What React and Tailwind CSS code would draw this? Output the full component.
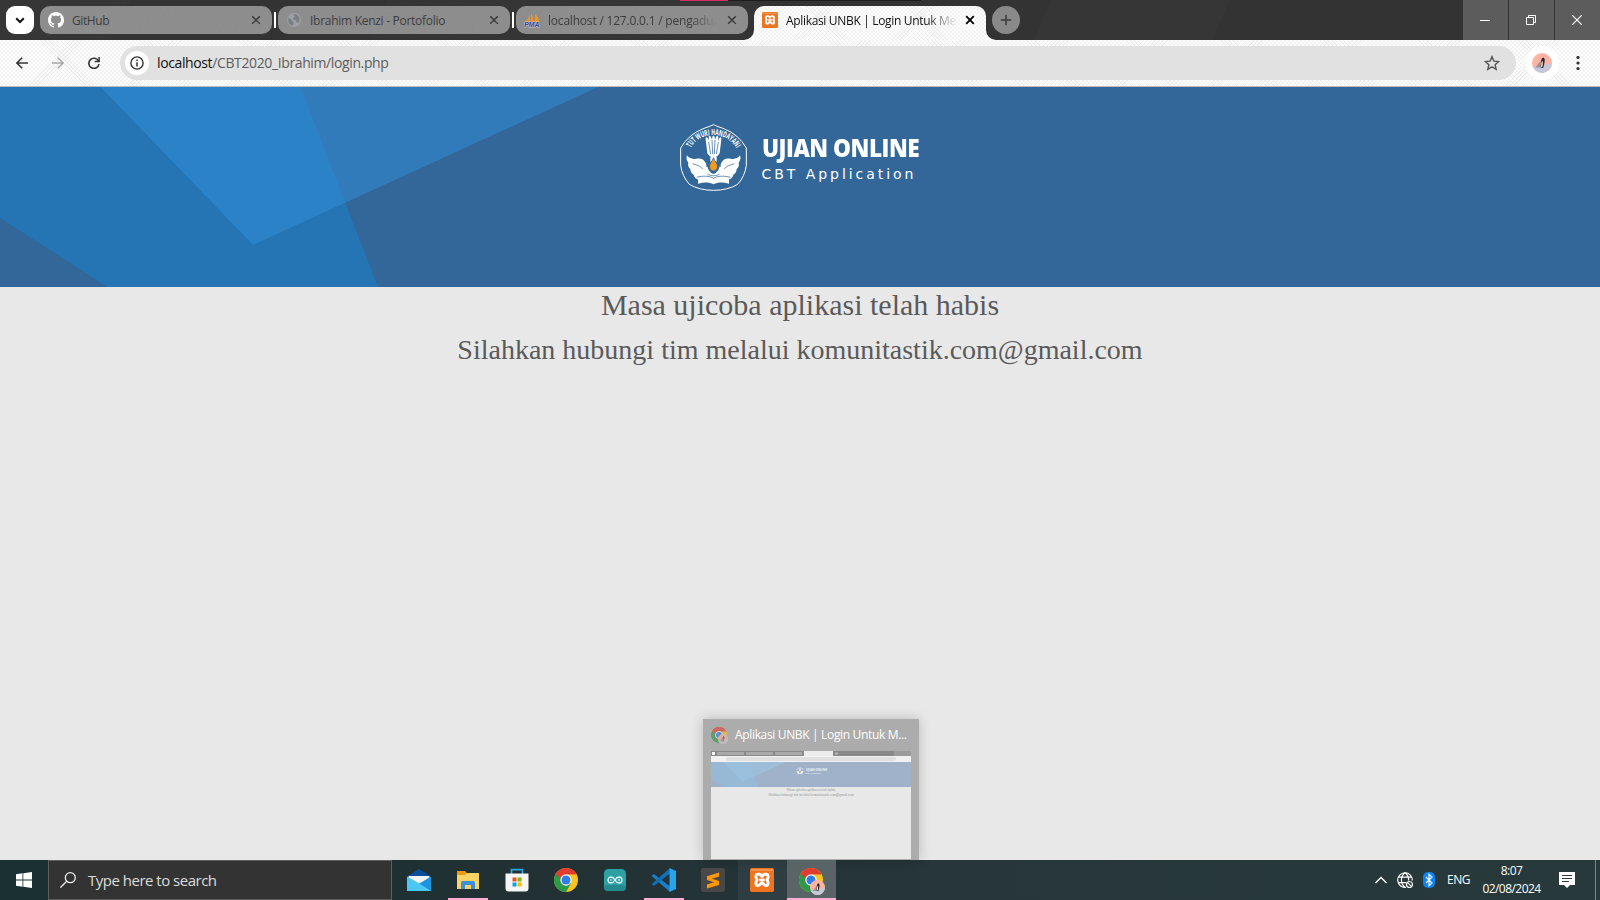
import React from "react";

const UI = "font-['Open_Sans','Noto_Sans',sans-serif]";

function Chevron() {
  return (
    <svg className="size-3" viewBox="0 0 12 12" fill="none" stroke="#111" strokeWidth="2">
      <path d="M2.2 4.2 6 8l3.8-3.8" />
    </svg>
  );
}

function Close({ color = "#333", w = 1.5 }) {
  return (
    <svg className="size-2.5 shrink-0" viewBox="0 0 10 10" stroke={color} strokeWidth={w}>
      <path d="M1.2 1.2 8.8 8.8M8.8 1.2 1.2 8.8" />
    </svg>
  );
}

function GitHubIcon() {
  return (
    <svg className="relative size-4 shrink-0" viewBox="0 0 16 16" fill="#fff">
      <path d="M8 0C3.58 0 0 3.58 0 8c0 3.54 2.29 6.53 5.47 7.59.4.07.55-.17.55-.38 0-.19-.01-.82-.01-1.49-2.01.37-2.53-.49-2.69-.94-.09-.23-.48-.94-.82-1.13-.28-.15-.68-.52-.01-.53.63-.01 1.08.58 1.23.82.72 1.21 1.87.87 2.33.66.07-.52.28-.87.51-1.07-1.78-.2-3.64-.89-3.64-3.95 0-.87.31-1.59.82-2.15-.08-.2-.36-1.02.08-2.12 0 0 .67-.21 2.2.82.64-.18 1.32-.27 2-.27s1.36.09 2 .27c1.53-1.04 2.2-.82 2.2-.82.44 1.1.16 1.92.08 2.12.51.56.82 1.27.82 2.15 0 3.07-1.87 3.75-3.65 3.95.29.25.54.73.54 1.48 0 1.07-.01 1.93-.01 2.2 0 .21.15.46.55.38A8.01 8.01 0 0 0 16 8c0-4.42-3.58-8-8-8z" />
    </svg>
  );
}

function GlobeIcon() {
  return (
    <svg className="relative size-4 shrink-0" viewBox="0 0 16 16">
      <circle cx="8" cy="8" r="7" fill="#9aa0a6" />
      <path d="M2.2 6.2c2 .2 3.300.8 3.600 2.300.2 1.200 1.800 1 1.900 2.500.1 1.200-.8 1.500-.9 2.700C3.500 13 1.500 9.800 2.200 6.200zM7.500 2c.2 1.500 1.200 1.600 1 2.900-.3 1.200-2 .8-1.800 2.400.2 1 2.300.2 3.200 1.200.8.8.4 1.800 1.500 2.200 1.200.3 1.800-.6 2-1.700C14.300 5 11.200 1.800 7.500 2z" fill="#7c7f82" />
    </svg>
  );
}

function PmaIcon() {
  return (
    <svg className="relative size-4 shrink-0" viewBox="0 0 16 16">
      <path d="M5.800.6C5.700 4.500 4.200 7.800 1 9.900h5.200zM7 1.400v8.500h2.600C9.400 6.500 8.700 3.700 7 1.400zM11 1.800c.2 3 .1 5.800-.6 8.100h4.800C14.800 6.500 13.500 4 11 1.800z" fill="#f6931d" />
      <text x="0.300" y="15.400" fontSize="6.600" fontWeight="700" fontStyle="italic" fill="#3d418c" stroke="#c6c7dd" strokeWidth="1" paintOrder="stroke" textLength="15.200" lengthAdjust="spacingAndGlyphs" fontFamily="Liberation Sans, sans-serif">PMA</text>
    </svg>
  );
}

function XamppIcon({ className }) {
  return (
    <svg className={className} viewBox="0 0 24 24">
      <rect width="24" height="24" rx="1.800" fill="#ee7420" />
      <path d="M1 2h22" stroke="#f8a56c" strokeWidth="1.200" />
      <path d="M8 6.200h1.600c1.700 0 1.600 2.400 2.400 2.400s.7-2.400 2.400-2.400H16c2.600 0 2.600 3.600.9 5.700 1.700 2.200 1.700 5.600-.9 5.600-3 0-2.300-2.800-4-2.800s-1 2.800-4 2.800c-2.600 0-2.600-3.400-.9-5.600C5.400 9.800 5.400 6.200 8 6.200z" fill="none" stroke="#fff" strokeWidth="2.900" strokeLinejoin="round" />
      <path d="M9.300 11.900h5.400" stroke="#fff" strokeWidth="2.600" />
    </svg>
  );
}

function Noise() {
  return (
    <svg className="pointer-events-none absolute inset-0 size-full opacity-25">
      <filter id="grain">
        <feTurbulence type="fractalNoise" baseFrequency=".45" numOctaves="3" />
        <feColorMatrix values="0 0 0 0 .3  0 0 0 0 .3  0 0 0 0 .3  0 0 0 3 -1.200" />
      </filter>
      <rect width="100%" height="100%" filter="url(#grain)" />
    </svg>
  );
}

function Tab({ icon, label, spacing, fade }) {
  return (
    <div className="relative flex h-7 w-[232px] shrink-0 items-center overflow-hidden rounded-[10px] bg-[#8d8d8d] pl-2 pr-[11px]">
      <Noise />
      {icon}
      <span className={`relative ml-2 flex-1 overflow-hidden whitespace-nowrap pt-px text-[12px] leading-[27px] text-[#3d3d3d] ${spacing} ${fade}`}>{label}</span>
      <Close />
    </div>
  );
}

const FADE = "[mask-image:linear-gradient(to_right,#000_80%,transparent_94%)]";
const WEAVE =
  "bg-white bg-[repeating-linear-gradient(45deg,transparent_0_2px,#0000000d_2px_2.800px),repeating-linear-gradient(-45deg,transparent_0_2px,#0000000d_2px_2.800px)]";

function Avatar({ className }) {
  return (
    <svg className={className} viewBox="0 0 20 20">
      <defs>
        <clipPath id="avatarClip"><circle cx="10" cy="10" r="10" /></clipPath>
      </defs>
      <g clipPath="url(#avatarClip)">
        <rect width="20" height="20" fill="#ffb3a3" />
        <path d="M0 14c6-1 12-1 20-4v10H0z" fill="#c3c9da" />
        <path d="m3.500 14.500 4-6 1.500 6z" fill="#a39597" />
        <path d="M8.800 14.500C8.200 10 9 5.500 11 4.400c1.900.100 2 3 1.400 5.600L11.200 15z" fill="#2a2526" />
        <path d="M9.300 14c-.2-3 .1-5.200 1.200-6.600.6 2.300.2 4.800-.3 6.600z" fill="#fff" />
      </g>
    </svg>
  );
}

function TabStrip() {
  return (
    <div className="relative flex h-10 shrink-0 items-start bg-[#343434] bg-[linear-gradient(115deg,#363636_0_8%,#333_8%_24%,#353535_24%_47%,#333_47%_65%,#363636_65%_76%,#333_76%)]">
      <div className="absolute left-[680px] top-0 h-px w-12 bg-[#d72b68]" />
      <div className="absolute left-[728px] top-0 h-px w-[193px] bg-[#1d1d1d]" />
      <div className="ml-1.5 mt-1.5 flex size-7 shrink-0 items-center justify-center rounded-[9px] bg-white"><Chevron /></div>
      <div className="ml-1.5 mt-1.5 flex items-center">
        <Tab icon={<GitHubIcon />} label="GitHub" spacing="tracking-[-0.4px]" fade="" />
        <div className="mx-0.5 h-4 w-0.5 bg-white" />
        <Tab icon={<GlobeIcon />} label="Ibrahim Kenzi - Portofolio" spacing="tracking-[-0.28px]" fade="" />
        <div className="mx-0.5 h-4 w-0.5 bg-white" />
        <Tab icon={<PmaIcon />} label="localhost / 127.0.0.1 / pengaduan" spacing="tracking-[-0.2px]" fade={FADE} />
      </div>
      <div className="-ml-1 mt-1.5 flex h-[34px] items-end">
        <svg className="size-2.5" viewBox="0 0 10 10"><path d="M0 10A10 10 0 0 0 10 0v10z" fill="#fbfbfb" /></svg>
        <div className={`flex h-[34px] w-[232px] items-start rounded-t-[10px] pl-2 pr-[11px] ${WEAVE}`}>
          <XamppIcon className="mt-1.5 size-4 shrink-0" />
          <span className={`ml-2 mr-2 flex-1 overflow-hidden whitespace-nowrap pt-px text-[12px] leading-7 tracking-[-0.33px] text-[#111] [mask-image:linear-gradient(to_right,#000_82%,transparent_100%)]`}>Aplikasi UNBK | Login Untuk Me</span>
          <div className="mt-[9px] flex"><Close color="#000" w={1.8} /></div>
        </div>
        <svg className="size-2.5" viewBox="0 0 10 10"><path d="M0 0A10 10 0 0 0 10 10H0z" fill="#fbfbfb" /></svg>
      </div>
      <div className="-ml-1 mt-1.5 flex size-7 items-center justify-center rounded-full bg-[#898989]">
        <svg className="size-3" viewBox="0 0 12 12" stroke="#3a3a3a" strokeWidth="1.500"><path d="M6 .8v10.400M.8 6h10.400" /></svg>
      </div>
      <div className="ml-auto flex h-10 gap-px">
        <div className="flex w-[45px] items-center bg-[#5c5c5c] pl-[17px] pt-px"><div className="h-px w-2.5 bg-white" /></div>
        <div className="flex w-[45px] items-center bg-[#5c5c5c] pl-[17px]">
          <svg className="size-2.5" viewBox="0 0 10 10" fill="none" stroke="#fff"><path d="M.5 2.500h7v7h-7zM2.500 2.500v-2h7v7h-2" /></svg>
        </div>
        <div className="flex w-[45px] items-center bg-[#5c5c5c] pl-[17px]">
          <svg className="size-2.5" viewBox="0 0 10 10" stroke="#fff" strokeWidth="1.100"><path d="m0 0 10 10M10 0 0 10" /></svg>
        </div>
      </div>
    </div>
  );
}

function Toolbar() {
  return (
    <div className={`flex h-[47px] shrink-0 items-start border-b border-[#bcbcbc] pt-1.5 ${WEAVE}`}>
      <div className="flex h-[34px] items-center">
        <svg className="ml-4 size-3" viewBox="0 0 12 12" fill="none" stroke="#333" strokeWidth="1.500"><path d="M12 6H1M6.200.7.900 6l5.300 5.300" /></svg>
        <svg className="ml-6 size-3" viewBox="0 0 12 12" fill="none" stroke="#a8a8a8" strokeWidth="1.500"><path d="M0 6h11M5.800.700 11.100 6l-5.300 5.300" /></svg>
        <svg className="ml-6 size-3" viewBox="0 0 12 12"><path d="M10.600 4.200A5.100 5.100 0 1 0 11 7" fill="none" stroke="#333" strokeWidth="1.600" /><path d="M11.900 0v5.200H6.700V3.700h3.700V0z" fill="#333" /></svg>
      </div>
      <div className="ml-5 flex h-[34px] w-[1396px] items-center rounded-full bg-[#e1e1e1] pl-[5px] pr-4">
        <div className="flex size-6 items-center justify-center rounded-full bg-white">
          <svg className="size-3.5" viewBox="0 0 14 14"><circle cx="7" cy="7" r="6.100" fill="none" stroke="#333" strokeWidth="1.400" /><path d="M7 6.200v4.300M7 3.400v1.500" stroke="#333" strokeWidth="1.500" /></svg>
        </div>
        <span className="mb-px ml-2 whitespace-nowrap text-[14px] tracking-[-0.38px] text-[#5c5c5c]"><span className="text-[#111]">localhost</span>/CBT2020_Ibrahim/login.php</span>
        <svg className="ml-auto size-4" viewBox="0 0 16 16" fill="none" stroke="#555" strokeWidth="1.400"><path d="m8 1.700 1.900 4.400 4.800.4-3.600 3.200 1.100 4.700L8 11.900l-4.200 2.500 1.100-4.700L1.300 6.500l4.800-.4z" /></svg>
      </div>
      <div className="ml-[9px] flex size-[34px] items-center justify-center rounded-full bg-white"><Avatar className="size-5" /></div>
      <svg className="ml-[17px] mt-2.5 h-3.5 w-1" viewBox="0 0 4 14" fill="#333"><circle cx="2" cy="1.500" r="1.600" /><circle cx="2" cy="7" r="1.600" /><circle cx="2" cy="12.500" r="1.600" /></svg>
    </div>
  );
}

function Emblem({ className }) {
  return (
    <svg className={className} viewBox="0 0 201 201">
      <path d="M100.500 2Q88 8 72 13 26 30 2 72V124Q6 156 28 181 58 199 100.500 199T173 181Q195 156 199 124V72Q175 30 129 13 113 8 100.500 2z" fill="none" stroke="#fff" strokeWidth="3" />
      <path id="mottoArc" d="M32 72C60 20 141 20 169 74" fill="none" />
      <text fontSize="25" fontWeight="700" fill="#fff" fontFamily="Open Sans, sans-serif"><textPath href="#mottoArc" textLength="166" lengthAdjust="spacingAndGlyphs">TUT WURI HANDAYANI</textPath></text>
      <g fill="#fff">
        <path d="M21 94c7 10 17 12 28 10 15-3 24 3 29 14l8 20q6 10 14.500 12 8.500-2 14.500-12l8-20c5-11 14-17 29-14 11 2 21 0 28-10 3 8 1 16-4 22 2 8 0 14-6 19 0 8-4 14-10 17-1 8-8 14-18 15q-20-2-41.500 2-21.500-4-41.500-2c-10-1-17-7-18-15-6-3-10-9-10-17-6-5-8-11-6-19-5-6-7-14-4-22z" />
        <path d="M77 46c-1-6 3-8 6-4l4 8-1-10c1-5 5-5 7-1l3 8 1-8c1-5 6-5 7 0l1 8 3-8c2-4 6-4 7 1l-1 10 4-8c3-4 7-2 6 4l-5 42-9 11v14H91V99l-9-11z" />
        <path d="M54 164c18-6 35-5 46.500 3 11.500-8 28.500-9 46.500-3v15c-18-5-34-5-46.500 2-12.500-7-28.500-7-46.500-2z" />
      </g>
      <g fill="none" stroke="#336799" strokeWidth="2.200">
        <path d="m86 54 6 36m4-42 2 42m7-42-2 42m12-36-6 36" />
        <path d="M92 97c-10 6-13 18-12 32m29-32c10 6 13 18 12 32M82 150c10 7 27 7 37 0" />
        <path d="M38 119c12 5 23 5 30 16m95-16c-12 5-23 5-30 16" />
        <path d="M50 160c18-5 38-5 50.500 3 12.500-8 32.500-8 50.500-3" />
      </g>
      <circle cx="100.500" cy="98" r="4" fill="#fff" />
      <path d="M100.500 101c-3 11-13 17-12 28 1 8 6 12 12 12s11-4 12-12c1-11-9-17-12-28z" fill="#f29a1f" stroke="#336799" strokeWidth="2.500" />
    </svg>
  );
}

function BlueShapes({ className }) {
  return (
    <svg className={className} viewBox="0 0 600 200" preserveAspectRatio="none">
      <path d="M0 0h300.500L378 200H107.500L0 131z" fill="#2574b3" />
      <path d="M100.500 0H598L253 158z" fill="#328fdc" fillOpacity=".5" />
    </svg>
  );
}

function Page() {
  return (
    <main className="flex flex-1 flex-col bg-[#e8e8e8]">
      <header className="relative h-[200px] shrink-0 bg-[#336799]">
        <BlueShapes className="absolute left-0 top-0 h-[200px] w-[600px]" />
        <div className="relative flex pl-[680px] pt-[37px]">
          <Emblem className="size-[67px]" />
          <div className="ml-[14.500px] pt-[9px] text-white">
            <div className="whitespace-nowrap font-['Open_Sans',sans-serif] text-[24px] font-extrabold leading-[30px] tracking-[-0.5px]"><div className="w-max origin-left scale-x-[0.94]">UJIAN ONLINE</div></div>
            <div className="whitespace-nowrap font-['DejaVu_Sans',sans-serif] text-[14px] leading-[22px] tracking-[2.95px]">CBT Application</div>
          </div>
        </div>
      </header>
      <div className="text-center font-['Liberation_Serif',serif] text-[#5a5a5a]">
        <p className="text-[30px] leading-[36px]">Masa ujicoba aplikasi telah habis</p>
        <p className="mt-[9px] text-[28px] leading-[36px]">Silahkan hubungi tim melalui komunitastik.com@gmail.com</p>
      </div>
    </main>
  );
}

function ChromeIcon({ className }) {
  return (
    <svg className={className} viewBox="0 0 24 24">
      <circle cx="12" cy="12" r="12" fill="#fcc31e" />
      <path d="M12 12 1.600 6A12 12 0 0 0 12 24l5.200-9z" fill="#2b9b49" />
      <path d="M1.600 6A12 12 0 0 1 22.400 6.300H12L6.800 15z" fill="#e33b2e" />
      <path d="M1.600 6 6.800 15 12 12z" fill="#2b9b49" />
      <path d="M1.600 6a12 12 0 0 1 20.800.3H12A5.700 5.700 0 0 0 6.700 10z" fill="#e33b2e" />
      <circle cx="12" cy="12" r="5.700" fill="#fff" />
      <circle cx="12" cy="12" r="4.500" fill="#2f7de9" />
    </svg>
  );
}

function Preview() {
  return (
    <div className="absolute left-[703px] top-[719px] flex h-[141px] w-[216px] flex-col bg-[#acacac] px-2 shadow-[0_0_12px_#00000033]">
      <div className="flex h-8 shrink-0 items-center">
        <div className="relative size-4 opacity-60"><ChromeIcon className="size-4" /><Avatar className="absolute -bottom-px -right-px size-2.5" /></div>
        <span className="ml-2 whitespace-nowrap text-[12px] tracking-[-0.34px] text-white">Aplikasi UNBK | Login Untuk M...</span>
      </div>
      <div className="flex h-[108px] flex-col bg-[#e8e8e8]">
        <div className="flex h-[5px] shrink-0 items-center gap-[2px] bg-[#898989] pl-[1px]">
          <i className="size-[3px] bg-white" />
          <i className="h-[3px] w-[27px] bg-[#a9a9a9]" />
          <i className="h-[3px] w-[27px] bg-[#a9a9a9]" />
          <i className="h-[3px] w-[27px] bg-[#a9a9a9]" />
          <i className="h-[5px] w-[29px] bg-[#ececec]" />
          <i className="size-[3px] rounded-full bg-[#b0b0b0]" />
          <i className="ml-auto h-[5px] w-[17px] bg-[#9b9b9b]" />
        </div>
        <div className="flex h-[6px] shrink-0 items-center bg-[#f1f1f1] px-[15px]"><i className="h-1 flex-1 rounded-full bg-[#e0e0e0]" /></div>
        <div className="relative h-[25px] shrink-0 bg-[#9fb2c9]">
          <svg className="absolute left-0 top-0 h-[25px] w-[75px]" viewBox="0 0 600 200" preserveAspectRatio="none">
            <path d="M0 0h300.500L378 200H107.500L0 131z" fill="#98b9d5" />
            <path d="M100.500 0H598L253 158z" fill="#9cc5e4" fillOpacity=".6" />
          </svg>
          <div className="relative flex items-center gap-[2px] pl-[85px] pt-[5px]">
            <Emblem className="size-2" />
            <div className="text-[3px] font-bold leading-[4px] text-white/80">UJIAN ONLINE<div className="text-[2px] font-normal leading-[3px]">CBT Application</div></div>
          </div>
        </div>
        <div className="pt-px text-center font-['Liberation_Serif',serif] text-[#999]">
          <p className="text-[3.700px] leading-[4px]">Masa ujicoba aplikasi telah habis</p>
          <p className="mt-px text-[3.500px] leading-[5px]">Silahkan hubungi tim melalui komunitastik.com@gmail.com</p>
        </div>
      </div>
    </div>
  );
}

function AppCell({ children, bg = "", line = "" }) {
  return (
    <div className={`relative flex h-10 w-[49px] items-center justify-center ${bg}`}>
      {children}
      {line && <div className={`absolute bottom-0 h-0.5 bg-[#ffadd0] ${line}`} />}
    </div>
  );
}

function Taskbar() {
  return (
    <footer className="flex h-10 shrink-0 items-stretch bg-[linear-gradient(90deg,#1b3033,#203033_30%,#26363a_60%,#28393b)]">
      <div className="flex w-12 items-center justify-center">
        <svg className="size-4" viewBox="0 0 16 16" fill="#fff"><path d="M0 2.200 6.500 1.300v6.300H0zM7.300 1.200 16 0v7.600H7.300zM0 8.400h6.500v6.300L0 13.800zM7.300 8.400H16V16l-8.700-1.200z" /></svg>
      </div>
      <div className="flex w-[344px] items-center border border-[#5e5e5e] bg-[#333]">
        <svg className="ml-[11px] size-4" viewBox="0 0 16 16" fill="none" stroke="#eee" strokeWidth="1.300"><circle cx="10.300" cy="5.700" r="5" /><path d="M6.700 9.300.4 15.600" /></svg>
        <span className="ml-3 whitespace-nowrap text-[15px] tracking-[-0.5px] text-[#dcdcdc]">Type here to search</span>
      </div>
      <div className="ml-[2.500px] flex">
        <AppCell>
          <svg className="h-6 w-6" viewBox="0 0 24 24"><path d="M12 1 24 8.500V20H0V8.500z" fill="#0a4f9e" /><path d="M1.500 8h21v10h-21z" fill="#f2f2f2" /><path d="M24 8.500V23H0z" fill="#2093df" /><path d="M0 8.500 12 15.300 24 23H0z" fill="#4cc8f5" /></svg>
        </AppCell>
        <AppCell line="w-10">
          <svg className="h-6 w-6" viewBox="0 0 24 24"><path d="M1 3h8l2 2h11v7H1z" fill="#e79b0e" /><path d="M1 7h8l2-2h12v16H1z" fill="#fbd365" /><path d="M5 21v-6q0-2 2-2h10q2 0 2 2v6h-4v-4H9v4z" fill="#3b8fdc" /></svg>
        </AppCell>
        <AppCell>
          <svg className="h-6 w-6" viewBox="0 0 24 24"><path d="M6.500 6V1.700h11V6" fill="none" stroke="#2aa9e8" strokeWidth="1.700" /><path d="M.500 5.500h23V20q0 3.500-3 3.500h-17q-3 0-3-3.500z" fill="#f5f5f5" /><path d="M7.500 9.500h4v4h-4z" fill="#f25022" /><path d="M12.500 9.500h4v4h-4z" fill="#7fba00" /><path d="M7.500 14.500h4v4h-4z" fill="#00a4ef" /><path d="M12.500 14.500h4v4h-4z" fill="#ffb900" /></svg>
        </AppCell>
        <AppCell><ChromeIcon className="size-6" /></AppCell>
        <AppCell>
          <svg className="size-[22px]" viewBox="0 0 22 22"><rect width="22" height="22" rx="4.500" fill="#2da0a3" /><rect y="16" width="22" height="6" rx="4" fill="#258a8d" /><path d="M11 11c-1.500-2.600-2.700-3-4-3a3 3 0 0 0 0 6c1.300 0 2.500-.400 4-3 1.500-2.600 2.700-3 4-3a3 3 0 0 1 0 6c-1.300 0-2.500-.400-4-3z" fill="none" stroke="#dff4f4" strokeWidth="1.300" /><path d="M6 11h2m6 0h2m-1-1v2" stroke="#dff4f4" strokeWidth=".8" /></svg>
        </AppCell>
        <AppCell line="w-10">
          <svg className="size-6" viewBox="0 0 24 24"><path d="M0 7.500 1.700 6 18 18.500V24L.300 8.500z" fill="#1682cf" /><path d="M0 16.500 1.700 18 18 5.500V0L.300 15.500z" fill="#0f70ba" /><path d="M17.500 0 24 3v18l-6.500 3z" fill="#27a4ee" /></svg>
        </AppCell>
        <AppCell>
          <svg className="size-6" viewBox="0 0 24 24"><rect width="24" height="24" rx="2" fill="#484848" /><path d="m6 8.200 12-3.700v4L11 10.700l7 2.200v4L6 20.500v-4l7-2.200-7-2.200z" fill="#ff9800" /></svg>
        </AppCell>
        <AppCell bg="bg-white/5"><XamppIcon className="size-6" /></AppCell>
        <AppCell bg="bg-[#586466]" line="w-full">
          <div className="relative size-6"><ChromeIcon className="size-6" /><Avatar className="absolute -bottom-[3px] -right-[2px] size-[15px]" /></div>
        </AppCell>
      </div>
      <div className="ml-auto flex items-center text-[12px] text-white">
        <svg className="h-3 w-3" viewBox="0 0 12 12" fill="none" stroke="#fff" strokeWidth="1.300"><path d="M.500 9 6 3.500 11.500 9" /></svg>
        <svg className="ml-[10px] size-4" viewBox="0 0 16 16" fill="none" stroke="#fff" strokeWidth="1.200"><path d="M9 15.300A7.300 7.300 0 1 1 15.300 8.500M1 5.200h14M1 10.600h8M7.800.700c-4.500 4-4.500 10.600 0 14.600M8.200.700c2.500 2.100 3.500 4.800 3.400 7.700" /><circle cx="12.500" cy="12.500" r="3" /><path d="m10.400 10.400 4.200 4.200" /></svg>
        <svg className="ml-[10px] h-4 w-3" viewBox="0 0 12 16"><rect width="12" height="16" rx="5" fill="#0a84f5" /><path d="m3 5 6 6-3 2.700V2.300L9 5l-6 6" fill="none" stroke="#fff" strokeWidth="1.100" /></svg>
        <span className="ml-3 w-6 whitespace-nowrap tracking-[-0.5px]">ENG</span>
        <div className="ml-[11px] w-[59px] text-center leading-[18px] tracking-[-0.55px]"><div>8:07</div><div className="whitespace-nowrap">02/08/2024</div></div>
        <svg className="ml-[18px] mr-5 size-4" viewBox="0 0 16 16"><path d="M0 0h16v13h-5l-3 3-3-3H0z" fill="#fff" /><path d="M3 3.500h10M3 6.500h10M3 9.500h7" stroke="#26363a" /></svg>
        <div className="mr-1 h-10 w-px bg-[#7b8688]" />
      </div>
    </footer>
  );
}

export default function App() {
  return (
    <div className={`relative flex h-[900px] w-[1600px] flex-col overflow-hidden ${UI}`}>
      <TabStrip />
      <Toolbar />
      <Page />
      <Preview />
      <Taskbar />
    </div>
  );
}
